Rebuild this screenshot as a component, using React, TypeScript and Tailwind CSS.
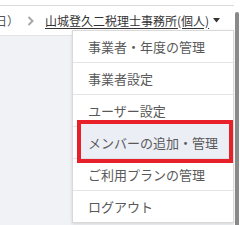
import React from "react";

const items = [
  "事業者・年度の管理",
  "事業者設定",
  "ユーザー設定",
  "メンバーの追加・管理",
  "ご利用プランの管理",
  "ログアウト",
];

export default function App() {
  return (
    <div
      className="w-[240px] h-[225px] overflow-hidden bg-white flex"
      style={{ fontFamily: '"Noto Sans CJK JP", "Noto Sans", sans-serif' }}
    >
      <div className="relative w-[234px] h-full flex flex-col">
        <div className="h-[6px] bg-white border-b border-[#dadada] shrink-0" />
        <div className="h-[30px] shrink-0 flex items-center border-b border-[#e3e4e8] bg-white">
          <span className="ml-[-5px] text-[12px] leading-none text-[#555]">日）</span>
          <svg className="ml-[8px]" width="7" height="10" viewBox="0 0 7 10">
            <path d="M1.5 1 L5.5 5 L1.5 9" fill="none" stroke="#a8a8a8" strokeWidth="2" />
          </svg>
          <span className="ml-[11px] text-[12px] leading-none text-[#333] underline underline-offset-2">
            山城登久二税理士事務所(個人)
          </span>
          <svg className="ml-[4px]" width="7" height="5" viewBox="0 0 7 5">
            <path d="M0 0 L7 0 L3.5 4.5 Z" fill="#333" />
          </svg>
        </div>
        <div className="flex-1 bg-[#f1f2f6]" />

        <div className="absolute left-[72px] top-[30px] w-[162px] bg-white border-t border-x border-[#d9d9d9] shadow-[0_1px_3px_rgba(0,0,0,0.12)]">
          {items.map((t, i) => (
            <div
              key={t}
              className={
                "relative h-[32px] flex items-center pl-[15px] border-b " +
                (i === items.length - 1 ? "border-[#d9d9d9]" : "border-[#e4e4e4]")
              }
            >
              {i === 3 && (
                <div className="absolute left-[4px] right-0 top-[-7px] h-[43px] border-[4px] border-[#e8202a] bg-[#eceef6]">
                  <div className="absolute left-0 right-0 bottom-0 h-px bg-[#dedfe4]" />
                </div>
              )}
              <span className="relative text-[13px] leading-none text-[#595959]">{t}</span>
            </div>
          ))}
        </div>
      </div>
      <div className="w-[6px] h-full bg-white flex flex-col pt-[12px] pl-[1px]">
        <div className="w-[4px] flex-1 rounded-t-full bg-[#8a8a8a]" />
      </div>
    </div>
  );
}
